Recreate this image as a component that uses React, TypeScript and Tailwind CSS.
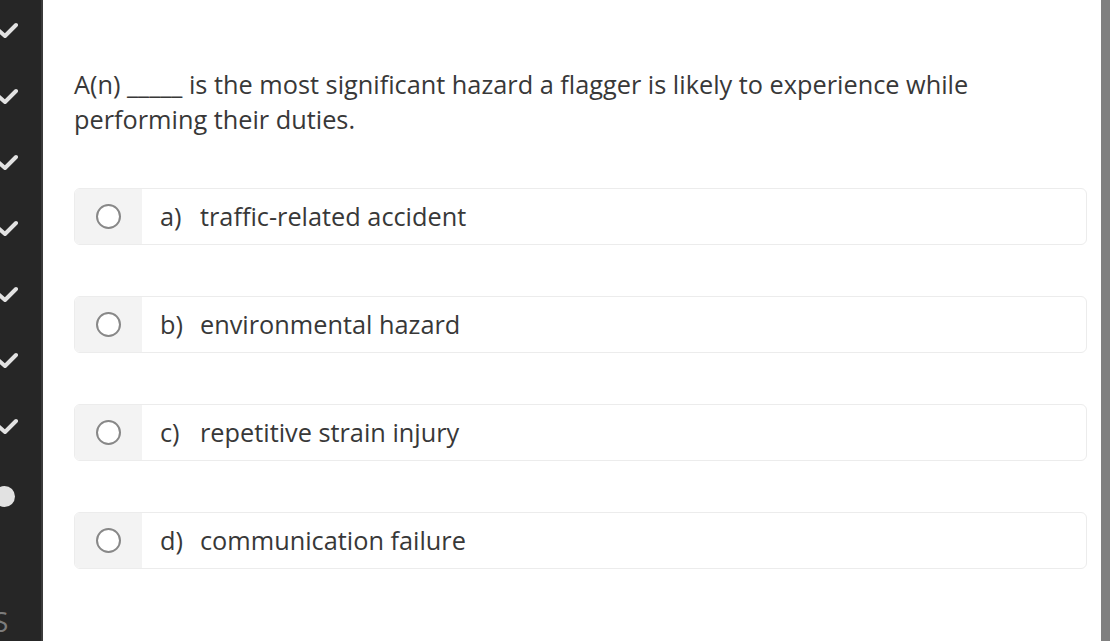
import React from "react";

const options = [
  { key: "a)", label: "traffic-related accident" },
  { key: "b)", label: "environmental hazard" },
  { key: "c)", label: "repetitive strain injury" },
  { key: "d)", label: "communication failure" },
];

function Check() {
  return (
    <svg width="28" height="20" viewBox="0 0 28 20" className="-ml-[10px]">
      <path
        d="M8 9l7 6 11-11"
        fill="none"
        stroke="#e2e2e2"
        strokeWidth="4"
        strokeLinecap="round"
        strokeLinejoin="round"
      />
    </svg>
  );
}

function Sidebar() {
  return (
    <div className="relative w-[43px] h-full shrink-0 bg-[#262626] border-r-2 border-[#3b3b3b] overflow-hidden flex flex-col">
      <div className="-mt-[2px] flex flex-col">
        {Array.from({ length: 7 }).map((_, i) => (
          <div key={i} className="h-[66px] flex items-center">
            <Check />
          </div>
        ))}
        <div className="h-[66px] flex items-center">
          <div className="-ml-[6px] w-[21px] h-[21px] rounded-full bg-[#e2e2e2] mt-[6px]" />
        </div>
      </div>
      <div className="mt-auto -ml-[7px] mb-[2px] text-[28px] leading-[36px] text-[#7c7c7c] font-['Open_Sans',sans-serif]">
        S
      </div>
    </div>
  );
}

function Option({ k, label }: { k: string; label: string }) {
  return (
    <div className="h-[57px] flex rounded-md border border-[#ececec] overflow-hidden bg-white">
      <div className="w-[67px] shrink-0 bg-[#f3f3f3] flex items-center justify-center">
        <div className="w-[25px] h-[25px] rounded-full border-2 border-[#888888] bg-white" />
      </div>
      <div className="flex items-center pl-[18px] text-[25.3px] text-[#383838]">
        <span className="w-[40px]">{k}</span>
        <span>{label}</span>
      </div>
    </div>
  );
}

export default function App() {
  return (
    <div className="w-[1119px] h-[641px] flex bg-white overflow-hidden font-['Open_Sans',sans-serif]">
      <Sidebar />
      <div className="flex-1 pl-[31px] pt-[67px]">
        <p className="text-[25.3px] leading-[35px] text-[#383838] w-[1000px]">
          A(n) _____ is the most significant hazard a flagger is likely to experience while performing their duties.
        </p>
        <div className="mt-[51px] flex flex-col gap-[51px]">
          {options.map((o) => (
            <Option key={o.key} k={o.key} label={o.label} />
          ))}
        </div>
      </div>
      <div className="w-[14px] shrink-0" />
      <div className="w-[9px] shrink-0 bg-[#808080]" />
      <div className="w-[9px] shrink-0" />
    </div>
  );
}
